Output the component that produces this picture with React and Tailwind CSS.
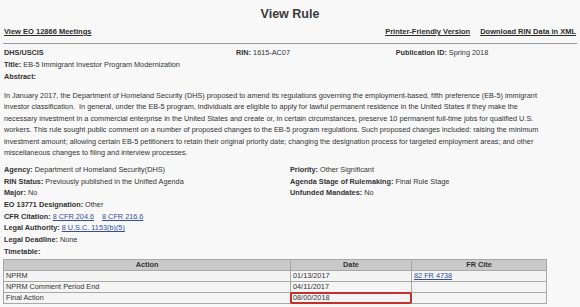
import React from "react";

const abstractLines = [
    "In January 2017, the Department of Homeland Security (DHS) proposed to amend its regulations governing the employment-based, fifth preference (EB-5) immigrant",
    "investor classification.\u00a0 In general, under the EB-5 program, individuals are eligible to apply for lawful permanent residence in the United States if they make the",
    "necessary investment in a commercial enterprise in the United States and create or, in certain circumstances, preserve 10 permanent full-time jobs for qualified U.S.",
    "workers. This rule sought public comment on a number of proposed changes to the EB-5 program regulations. Such proposed changes included: raising the minimum",
    "investment amount; allowing certain EB-5 petitioners to retain their original priority date; changing the designation process for targeted employment areas; and other",
    "miscellaneous changes to filing and interview processes.",
];

const timetable = [
    { action: "NPRM", date: "01/13/2017", cite: "82 FR 4738" },
    { action: "NPRM Comment Period End", date: "04/11/2017", cite: "" },
    { action: "Final Action", date: "08/00/2018", cite: "", marked: true },
];

function Field({ label, children }) {
    return (
        <div className="h-[11.7px] whitespace-nowrap">
            <span className="font-bold">{label}</span> {children}
        </div>
    );
}

function BlueLink({ children }) {
    return <a className="text-[#2f4f9f] underline">{children}</a>;
}

export default function App() {
    return (
        <div className="w-[580px] h-[307px] overflow-hidden bg-[#f8f8f8] text-[#333] font-['Liberation_Sans',Arial,sans-serif] text-[7.3px] leading-[11.5px]">
            {/* Heading */}
            <h1 className="pt-[6px] text-center text-[12.5px] leading-[16px] font-bold text-[#3a3a3a]">View Rule</h1>

            {/* Top links */}
            <div className="mt-[4px] flex items-center justify-between px-[4px] text-[7.5px] font-bold text-[#2b2b2b]">
                <a className="underline">View EO 12866 Meetings</a>
                <div className="flex gap-[10px]">
                    <a className="underline">Printer-Friendly Version</a>
                    <a className="underline">Download RIN Data in XML</a>
                </div>
            </div>
            <div className="mx-[3px] mt-[5px] h-px bg-[#9a9a9a]" />

            {/* Identification */}
            <div className="mt-[3.5px] grid grid-cols-[286px_1fr] pl-[4px]">
                <div className="flex justify-between">
                    <span className="font-bold">DHS/USCIS</span>
                    <span><span className="font-bold">RIN:</span> 1615-AC07</span>
                </div>
                <div className="text-center pl-[14px]">
                    <span className="font-bold">Publication ID:</span> Spring 2018
                </div>
            </div>
            <div className="pl-[4px]">
                <span className="font-bold">Title:</span> EB-5 Immigrant Investor Program Modernization
            </div>
            <div className="mt-[1px] pl-[4px] font-bold">Abstract:</div>

            <p className="mt-[7.5px] pl-[4px] leading-[11.4px] whitespace-nowrap">
                {abstractLines.map((line, i) => (
                    <span key={i} className="block">{line}</span>
                ))}
            </p>

            {/* Details */}
            <div className="mt-[5.6px] grid grid-cols-[286px_1fr] pl-[4px]">
                <div>
                    <Field label="Agency:">Department of Homeland Security(DHS)</Field>
                    <Field label="RIN Status:">Previously published in the Unified Agenda</Field>
                    <Field label="Major:">No</Field>
                    <Field label="EO 13771 Designation:">Other</Field>
                    <Field label="CFR Citation:">
                        <BlueLink>8 CFR 204.6</BlueLink>
                        <span className="inline-block w-[8px]" />
                        <BlueLink>8 CFR 216.6</BlueLink>
                    </Field>
                    <Field label="Legal Authority:"><BlueLink>8 U.S.C. 1153(b)(5)</BlueLink></Field>
                    <Field label="Legal Deadline:">None</Field>
                    <Field label="Timetable:" />
                </div>
                <div>
                    <Field label="Priority:">Other Significant</Field>
                    <Field label="Agenda Stage of Rulemaking:">Final Rule Stage</Field>
                    <Field label="Unfunded Mandates:">No</Field>
                </div>
            </div>

            {/* Timetable */}
            <table className="mt-[1.3px] ml-[3px] w-[543px] border-collapse table-fixed leading-[10px]">
                <colgroup>
                    <col className="w-[287px]" />
                    <col className="w-[121px]" />
                    <col className="w-[135px]" />
                </colgroup>
                <thead>
                    <tr className="bg-[#c9c9c9] h-[10px]">
                        <th className="border border-[#a8a8a8] font-bold text-center">Action</th>
                        <th className="border border-[#a8a8a8] font-bold text-center">Date</th>
                        <th className="border border-[#a8a8a8] font-bold text-center">FR Cite</th>
                    </tr>
                </thead>
                <tbody>
                    {timetable.map((row) => (
                        <tr key={row.action} className="h-[11px] bg-[#f4f4f4]">
                            <td className="border border-[#a8a8a8] px-[2px] py-0">{row.action}</td>
                            <td className="relative border border-[#a8a8a8] px-[2px] py-0">
                                {row.date}
                                {row.marked && (
                                    <div className="absolute -inset-[1px] rounded-[2px] border-2 border-[#c4302b]" />
                                )}
                            </td>
                            <td className="border border-[#a8a8a8] px-[2px] py-0">
                                {row.cite && <BlueLink>{row.cite}</BlueLink>}
                            </td>
                        </tr>
                    ))}
                </tbody>
            </table>
        </div>
    );
}
